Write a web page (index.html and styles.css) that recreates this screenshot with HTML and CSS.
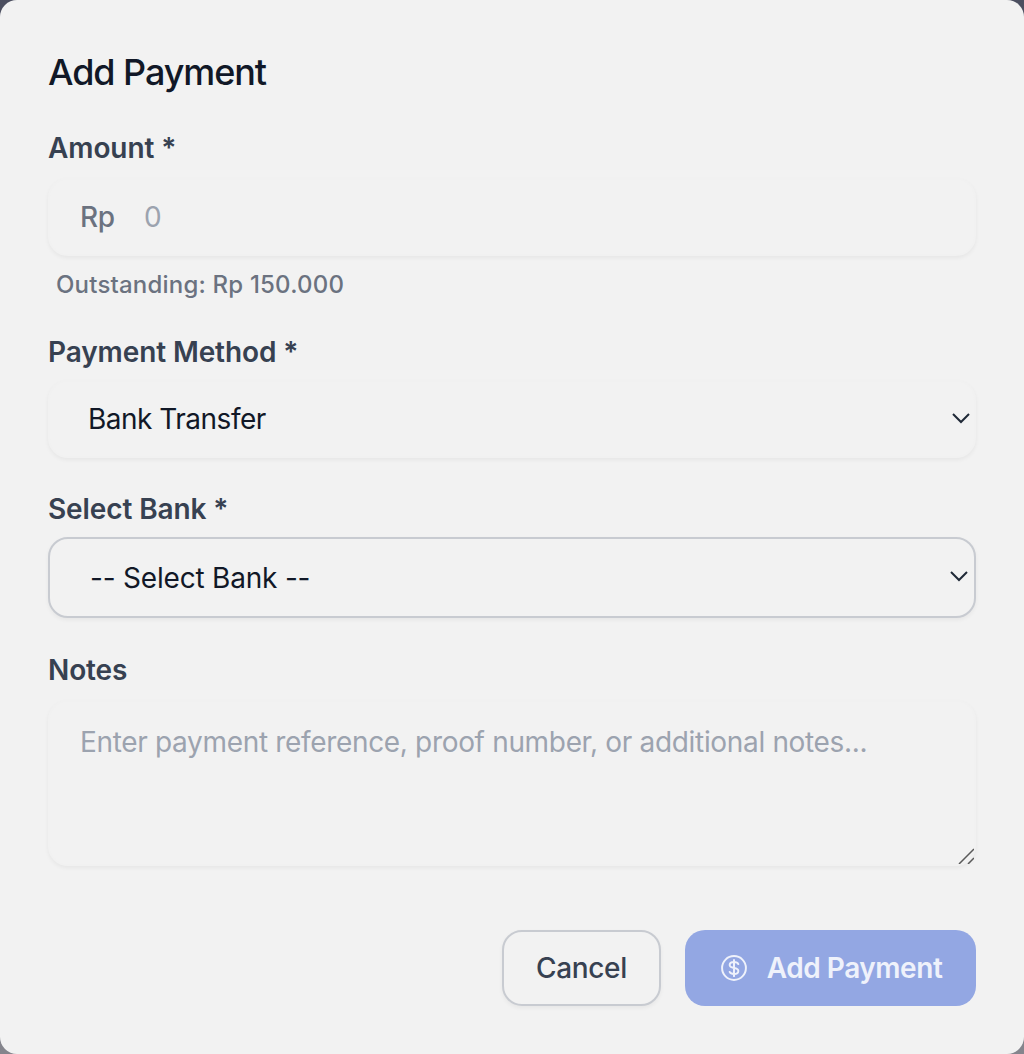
FILE: index.html
```html
<!DOCTYPE html>
<html lang="en">
<head>
    <meta charset="UTF-8">
    <meta name="viewport" content="width=device-width, initial-scale=1.0">
    <title>Add Payment</title>
    <link rel="stylesheet" href="styles.css">
</head>
<body>
    <div class="modal">
        <h2 class="modal-title">Add Payment</h2>
        <form class="payment-form">
            <div class="form-group amount-group">
                <label for="amount">Amount *</label>
                <div class="field amount-field">
                    <span class="currency">Rp</span>
                    <input type="text" id="amount" placeholder="0">
                </div>
                <p class="hint">Outstanding: Rp 150.000</p>
            </div>
            <div class="form-group method-group">
                <label for="method">Payment Method *</label>
                <div class="select-wrap">
                    <select id="method" class="field method-select">
                        <option>Bank Transfer</option>
                        <option>Cash</option>
                    </select>
                    <svg class="chevron" viewBox="0 0 18 12" fill="none" stroke="#1f2937" stroke-width="2"><path d="M1 2l8 8 8-8"/></svg>
                </div>
            </div>
            <div class="form-group bank-group">
                <label for="bank">Select Bank *</label>
                <div class="select-wrap">
                    <select id="bank" class="field bank-select">
                        <option>-- Select Bank --</option>
                    </select>
                    <svg class="chevron chevron-bank" viewBox="0 0 18 12" fill="none" stroke="#1f2937" stroke-width="2"><path d="M1 2l8 8 8-8"/></svg>
                </div>
            </div>
            <div class="form-group notes-group">
                <label for="notes">Notes</label>
                <div class="notes-wrap">
                    <textarea id="notes" class="field notes" placeholder="Enter payment reference, proof number, or additional notes..."></textarea>
                    <svg class="resizer" viewBox="0 0 16 16" fill="none" stroke="#5a5a5a" stroke-width="1.5"><path d="M1 16L16 1M10 16l6-6"/></svg>
                </div>
            </div>
            <div class="actions">
                <button type="button" class="btn btn-cancel">Cancel</button>
                <button type="button" class="btn btn-submit">
                    <svg class="btn-icon" viewBox="0 0 24 24" fill="none" stroke="currentColor" stroke-width="1.8" stroke-linecap="round" stroke-linejoin="round">
                        <circle cx="12" cy="12" r="11"/>
                        <path d="M12 4.5v15M16 8.4c-.5-1.1-2-1.9-4-1.9-2.300 0-4 1.200-4 2.800 0 1.700 1.700 2.300 4 2.700s4 1 4 2.700c0 1.600-1.700 2.800-4 2.800-2 0-3.500-.8-4-1.900"/>
                    </svg>
                    Add Payment
                </button>
            </div>
        </form>
    </div>
</body>
</html>
```

FILE: styles.css
```css
* {
    margin: 0;
    padding: 0;
    box-sizing: border-box;
}
html, body {
    height: 100%;
}
body {
    font-family: 'Inter', 'Liberation Sans', sans-serif;
    background: linear-gradient(#4c4f60, #85858d);
    overflow: hidden;
}
.modal {
    height: 1054px;
    background-color: #f2f2f2;
    border-radius: 17px;
    padding: 50px 48px 0;
}
.modal-title {
    font-size: 36px;
    line-height: 44px;
    font-weight: 500;
    letter-spacing: -1.08px;
    color: #111827;
}
.form-group label {
    display: block;
    font-size: 28px;
    line-height: 36px;
    font-weight: 600;
    letter-spacing: -0.1px;
    color: #374151;
    margin-bottom: 10px;
}
.amount-group {
    margin-top: 36px;
}
.amount-group label,
.notes-group label {
    margin-bottom: 12px;
}
.method-group {
    margin-top: 32px;
}
.bank-group {
    margin-top: 33px;
}
.notes-group {
    margin-top: 34px;
}
.field {
    display: block;
    width: 100%;
    font-family: inherit;
    font-size: 28px;
    letter-spacing: -0.33px;
    color: #111827;
    background-color: #f2f2f2;
    border: 2px solid #f1f1f1;
    border-radius: 20px;
    box-shadow: 0 2px 4px rgba(0, 0, 0, 0.05);
    outline: none;
}
.amount-field {
    display: flex;
    align-items: center;
    height: 78px;
    padding-left: 30px;
}
.currency {
    color: #6b7280;
    font-weight: 500;
    width: 64px;
}
.amount-field input {
    flex: 1;
    border: none;
    background: none;
    outline: none;
    font-family: inherit;
    font-size: 28px;
    color: #111827;
}
.amount-field input::placeholder,
.notes::placeholder {
    color: #9ca3af;
    opacity: 1;
}
.hint {
    margin: 13px 0 0 8px;
    font-size: 24px;
    line-height: 32px;
    font-weight: 500;
    letter-spacing: 0.2px;
    color: #6b7280;
}
.select-wrap {
    position: relative;
}
.select-wrap select {
    appearance: none;
    -webkit-appearance: none;
}
.method-group {
    padding-top: 1px;
}
.method-select {
    height: 78px;
    padding-left: 38px;
    letter-spacing: -0.5px;
}
.bank-select {
    height: 81px;
    padding-left: 40px;
    border-color: #c8cbd1;
    letter-spacing: -0.2px;
}
.chevron {
    position: absolute;
    top: 32px;
    right: 6px;
    width: 18px;
    height: 12px;
}
.chevron-bank {
    top: 33px;
    right: 8px;
}
.notes-wrap {
    position: relative;
}
.notes {
    height: 166px;
    padding: 20px 30px;
    line-height: 40px;
    resize: none;
}
.resizer {
    position: absolute;
    right: 2px;
    bottom: 2px;
    width: 16px;
    height: 16px;
}
.actions {
    display: flex;
    justify-content: flex-end;
    gap: 24px;
    margin-top: 64px;
}
.btn {
    display: flex;
    align-items: center;
    justify-content: center;
    height: 76px;
    font-family: inherit;
    font-size: 28px;
    font-weight: 500;
    letter-spacing: -0.35px;
    border-radius: 20px;
    cursor: pointer;
}
.btn-cancel {
    width: 159px;
    color: #374151;
    background-color: #f2f2f2;
    border: 2px solid #c8cbd1;
    box-shadow: 0 2px 4px rgba(0, 0, 0, 0.05);
}
.btn-submit {
    width: 291px;
    gap: 20px;
    padding-left: 2px;
    font-weight: 560;
    letter-spacing: -0.45px;
    color: #eff2fb;
    background-color: #93a7e3;
    border: none;
}
.btn-icon {
    width: 26px;
    height: 26px;
}
```
